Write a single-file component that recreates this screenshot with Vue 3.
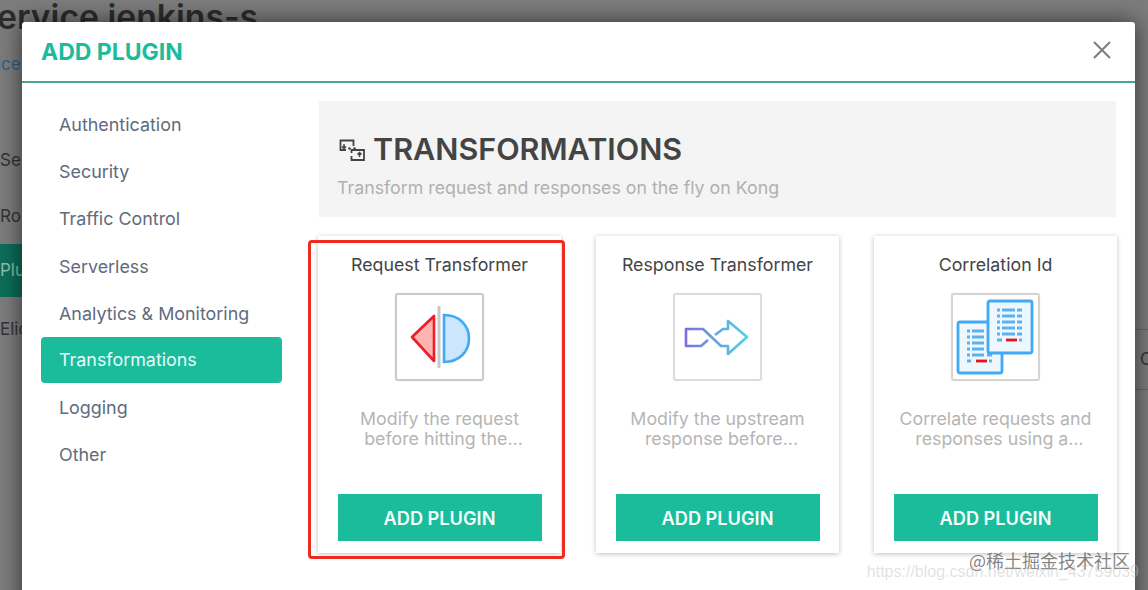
<script setup>
const menu = ['Authentication', 'Security', 'Traffic Control', 'Serverless', 'Analytics & Monitoring', 'Transformations', 'Logging', 'Other']
const plugins = [
  { name: 'Request Transformer', desc: ['Modify the request', 'before hitting the...'], icon: 'req', marked: true },
  { name: 'Response Transformer', desc: ['Modify the upstream', 'response before...'], icon: 'res' },
  { name: 'Correlation Id', desc: ['Correlate requests and', 'responses using a...'], icon: 'cor' },
]
const backRows = [15, 21, 27, 33, 39]
const frontRows = [36, 42, 48, 54, 60]
</script>

<template>
  <div class="page">
    <div class="back">
      <div class="back-main">
        <div class="back-title">ervice jenkins-s</div>
        <div class="back-link">ice</div>
        <ul class="back-nav">
          <li>Se</li>
          <li>Ro</li>
          <li class="on">Plu</li>
          <li>Elic</li>
        </ul>
      </div>
      <div class="back-side">
        <div class="back-row">C</div>
      </div>
    </div>
    <div class="modal">
      <header class="head">
        <h2>ADD PLUGIN</h2>
        <svg class="close" viewBox="0 0 18 18" width="18" height="18"><path d="M1 1 17 17M17 1 1 17" stroke="#7d7d7d" stroke-width="2" fill="none" /></svg>
      </header>
      <div class="body">
        <nav class="menu">
          <a v-for="m in menu" :key="m" :class="{ active: m === 'Transformations' }">{{ m }}</a>
        </nav>
        <main class="content">
          <section class="banner">
            <div class="banner-title">
              <svg viewBox="0 0 26 22" width="26" height="22" fill="none" stroke="#444" stroke-width="1.800">
                <path d="M7 11H1.500V1.500H14.500V7" />
                <path d="M12.500 14V11H25V21H12.500V17" />
                <path d="M5 5V9M3 7.500 5 9.500 7 7.500M20.500 18V14M18.500 15.500 20.500 13.500 22.500 15.500" stroke-width="1.500" />
                <circle cx="10.500" cy="9.500" r="1.300" fill="#444" stroke="none" />
                <circle cx="15.500" cy="9.500" r="1.300" fill="#444" stroke="none" />
              </svg>
              <h3>TRANSFORMATIONS</h3>
            </div>
            <p>Transform request and responses on the fly on Kong</p>
          </section>
          <div class="cards">
            <article v-for="p in plugins" :key="p.name" class="card" :class="[p.icon, { marked: p.marked }]">
              <h4>{{ p.name }}</h4>
              <div class="tile">
                <svg v-if="p.icon === 'req'" viewBox="0 0 85 84" width="85" height="84">
                  <path d="M15 42 37 21V66Z" fill="#ffb3b3" stroke="#ee1c25" stroke-width="2.600" stroke-linejoin="round" />
                  <path d="M42 11V73" stroke="#c8c8c8" stroke-width="3" />
                  <path d="M47 20C62 20 72 30 72 43.500S62 67 47 67Z" fill="#cce7fd" stroke="#42a9f5" stroke-width="2.600" />
                </svg>
                <svg v-else-if="p.icon === 'res'" viewBox="0 0 85 84" width="85" height="84">
                  <defs>
                    <linearGradient id="flow" gradientUnits="userSpaceOnUse" x1="11" x2="72" y1="0" y2="0">
                      <stop offset="0" stop-color="#7a6fe0" />
                      <stop offset=".45" stop-color="#6a9fe0" />
                      <stop offset="1" stop-color="#4fd2e6" />
                    </linearGradient>
                  </defs>
                  <path d="M33 45 26 51H11V34H28L46 51H53V59L72 42 53 26V34H48L40 40" fill="none" stroke="url(#flow)" stroke-width="2.600" stroke-linejoin="round" />
                </svg>
                <svg v-else viewBox="0 0 85 84" width="85" height="84">
                  <g class="doc">
                    <rect x="5" y="27" width="44" height="51" rx="2" />
                    <path v-for="y in frontRows" :key="'f' + y" :d="`M14 ${y}h3M19 ${y}h12M34 ${y}h5`" />
                    <path d="M14 66h4M36 66h3" />
                    <path class="red" d="M23 66h11" />
                  </g>
                  <g class="doc">
                    <rect x="35" y="6" width="44" height="52" rx="2" />
                    <path v-for="y in backRows" :key="'b' + y" :d="`M44 ${y}h3M49 ${y}h13M64 ${y}h5`" />
                    <path d="M44 45h5M66 45h3" />
                    <path class="red" d="M53 45h11" />
                  </g>
                </svg>
              </div>
              <p class="desc"><span v-for="d in p.desc" :key="d">{{ d }}</span></p>
              <button type="button">ADD PLUGIN</button>
            </article>
          </div>
        </main>
      </div>
    </div>
    <div class="marks">
      <span class="juejin">@稀土掘金技术社区</span>
      <span class="csdn">https://blog.csdn.net/weixin_43759039</span>
    </div>
  </div>
</template>

<style scoped>
.page { position: relative; width: 1148px; height: 590px; overflow: hidden; background: #7c7c7c; font-family: Inter, "Noto Sans", sans-serif; }
.back { height: 590px; display: flex; justify-content: space-between; color: #333; }
.back-main { width: 200px; }
.back-title { font-size: 33.700px; font-weight: 600; line-height: 40px; margin: -3px 0 0 -3px; color: #2c2c2c; white-space: nowrap; }
.back-link { font-size: 17px; line-height: 20px; color: #2d5f86; margin: 17px 0 0 -3px; }
.back-nav { list-style: none; margin: 75px 0 0; padding: 0; font-size: 17px; color: #333; }
.back-nav li { height: 56px; line-height: 22px; }
.back-nav li.on { height: 53px; line-height: 53px; margin-top: -17px; margin-bottom: 21px; background: #0c6d58; color: #8fbdb0; }
.back-side { width: 13px; padding-top: 246px; box-sizing: border-box; overflow: hidden; }
.back-row { margin-top: 83px; height: 61px; box-sizing: border-box; padding: 19px 0 0 5px; font-size: 17px; line-height: 20px; border-top: 1px solid #666; border-bottom: 1px solid #666; color: #333; }
.modal { position: absolute; left: 22px; top: 22px; width: 1113px; height: 600px; border-radius: 3px 3px 0 0; background: #fff; box-shadow: 0 0 22px rgba(0, 0, 0, .6); }
.head { height: 59px; border-bottom: 2px solid #46a595; display: flex; justify-content: space-between; align-items: center; padding: 0 24px 0 19px; }
.head h2 { margin: 0; font-size: 23px; font-weight: 700; color: #1abc9c; }
.close { margin-top: -4px; }
.body { display: flex; padding: 18px 0 0 19px; }
.menu { width: 241px; flex: none; display: flex; flex-direction: column; }
.menu a { height: 47.200px; display: flex; align-items: center; padding-left: 18px; font-size: 17.900px; color: #5f6b7e; border-radius: 4px; white-space: nowrap; }
.menu a.active { background: #1abc9c; color: #e6fbf6; height: 46px; margin: 0 0 1px; }
.content { margin-left: 37px; width: 797px; flex: none; }
.banner { height: 116px; background: #f4f4f4; padding: 31px 18px 0; box-sizing: border-box; }
.banner-title { display: flex; align-items: center; gap: 8px; }
.banner-title svg { margin: 2px 0 0 2px; }
.banner h3 { margin: 0; font-size: 30.500px; font-weight: 600; color: #444; line-height: 34px; }
.banner p { margin: 11px 0 0; font-size: 17.800px; color: #b0b0b0; white-space: nowrap; }
.cards { display: flex; gap: 35px; margin: 19px 0 0 -1px; }
.card { position: relative; flex: none; width: 243px; height: 317px; box-sizing: border-box; background: #fff; box-shadow: 0 1px 5px rgba(0, 0, 0, .25); display: flex; flex-direction: column; align-items: center; padding: 19px 19px 12px; }
.card.marked::after { content: ""; position: absolute; left: -10px; top: 4px; right: -4px; bottom: -6px; border: 3px solid #ee2b1f; border-radius: 4px; pointer-events: none; }
.card h4 { margin: 0; font-size: 17.800px; font-weight: 400; color: #444; line-height: 20px; white-space: nowrap; }
.tile { width: 85px; height: 84px; margin-top: 18px; border: 2px solid #cacaca; border-radius: 3px; display: flex; align-items: center; justify-content: center; box-shadow: 0 0 1px #cacaca; }
.res .tile { border-color: #dcdcdc; box-shadow: 0 0 1px #dcdcdc; }
.cor .tile { border-color: #d4d4d4; box-shadow: 0 0 1px #d4d4d4; }
.desc { margin: 28px 0 0; height: 53px; font-size: 17.800px; line-height: 20px; color: #b5b5b5; display: flex; flex-direction: column; align-items: center; white-space: nowrap; }
.desc span + span { padding-left: 8px; }
.card button { margin-top: auto; width: 204px; height: 47px; padding: 0; border: 0; background: #1abc9c; color: #f2fffb; font: 600 18.200px Inter, "Noto Sans", sans-serif; }
.doc rect { fill: #eef7fe; stroke: #42a9f5; stroke-width: 2.800; }
.doc path { stroke: #5bb2ee; stroke-width: 2.800; fill: none; }
.doc path.red { stroke: #e8101c; }
.marks { position: absolute; left: 0; top: 0; width: 1148px; height: 590px; pointer-events: none; }
.juejin { position: absolute; right: 18px; bottom: 17px; font: 18px "Noto Sans CJK SC", sans-serif; color: rgba(90, 90, 90, .75); white-space: nowrap; }
.csdn { position: absolute; right: 9px; bottom: 9px; font: 16px "Liberation Sans", sans-serif; color: rgba(190, 190, 190, .45); white-space: nowrap; }
</style>
